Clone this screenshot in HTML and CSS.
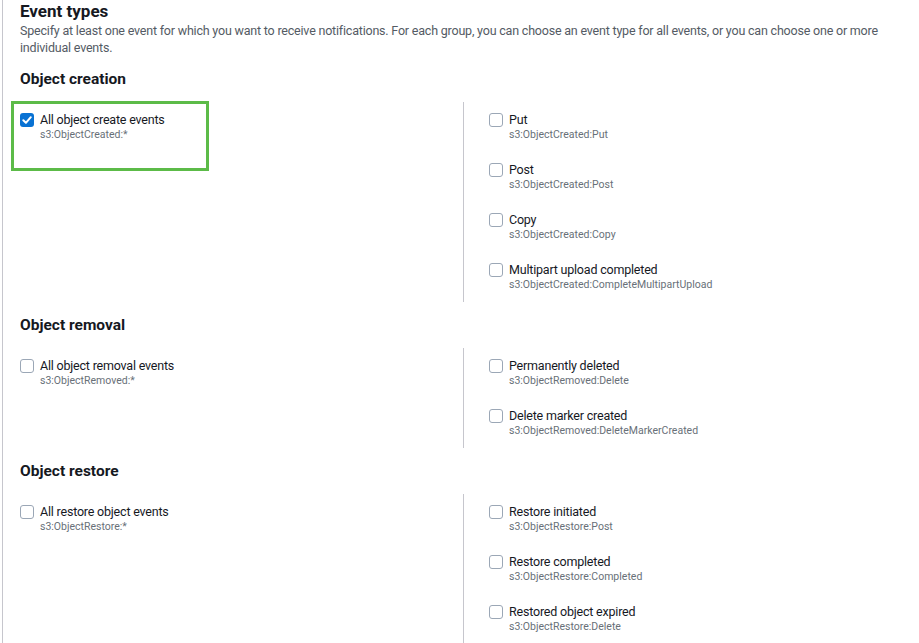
FILE: index.html
```html
<!DOCTYPE html>
<html>
<head>
<meta charset="utf-8">
<link rel="stylesheet" href="styles.css">
</head>
<body>
<div class="panel">
  <h2 class="title">Event types</h2>
  <p class="desc">Specify at least one event for which you want to receive notifications. For each group, you can choose an event type for all events, or you can choose one or more individual events.</p>

  <h3 class="group-title">Object creation</h3>
  <div class="group">
    <div class="col">
      <label class="opt highlighted">
        <span class="box checked"><svg viewBox="0 0 14 14" width="14" height="14"><path d="M3.3 7.2 L5.9 9.8 L10.8 4.2" fill="none" stroke="#fff" stroke-width="2" stroke-linecap="round" stroke-linejoin="round"/></svg></span>
        <span class="text"><span class="name">All object create events</span><span class="sub">s3:ObjectCreated:*</span></span>
      </label>
    </div>
    <div class="col right">
      <label class="opt"><span class="box"></span><span class="text"><span class="name">Put</span><span class="sub">s3:ObjectCreated:Put</span></span></label>
      <label class="opt"><span class="box"></span><span class="text"><span class="name">Post</span><span class="sub">s3:ObjectCreated:Post</span></span></label>
      <label class="opt"><span class="box"></span><span class="text"><span class="name">Copy</span><span class="sub">s3:ObjectCreated:Copy</span></span></label>
      <label class="opt"><span class="box"></span><span class="text"><span class="name">Multipart upload completed</span><span class="sub">s3:ObjectCreated:CompleteMultipartUpload</span></span></label>
    </div>
  </div>

  <h3 class="group-title">Object removal</h3>
  <div class="group">
    <div class="col">
      <label class="opt"><span class="box"></span><span class="text"><span class="name">All object removal events</span><span class="sub">s3:ObjectRemoved:*</span></span></label>
    </div>
    <div class="col right">
      <label class="opt"><span class="box"></span><span class="text"><span class="name">Permanently deleted</span><span class="sub">s3:ObjectRemoved:Delete</span></span></label>
      <label class="opt"><span class="box"></span><span class="text"><span class="name">Delete marker created</span><span class="sub">s3:ObjectRemoved:DeleteMarkerCreated</span></span></label>
    </div>
  </div>

  <h3 class="group-title">Object restore</h3>
  <div class="group">
    <div class="col">
      <label class="opt"><span class="box"></span><span class="text"><span class="name">All restore object events</span><span class="sub">s3:ObjectRestore:*</span></span></label>
    </div>
    <div class="col right">
      <label class="opt"><span class="box"></span><span class="text"><span class="name">Restore initiated</span><span class="sub">s3:ObjectRestore:Post</span></span></label>
      <label class="opt"><span class="box"></span><span class="text"><span class="name">Restore completed</span><span class="sub">s3:ObjectRestore:Completed</span></span></label>
      <label class="opt"><span class="box"></span><span class="text"><span class="name">Restored object expired</span><span class="sub">s3:ObjectRestore:Delete</span></span></label>
    </div>
  </div>
</div>
</body>
</html>
```

FILE: styles.css
```css
html, body {
  margin: 0;
  padding: 0;
  background: #ffffff;
}
body {
  font-family: Roboto, "Liberation Sans", sans-serif;
  color: #16191f;
  overflow: hidden;
}
.panel {
  margin-left: 2px;
  border-left: 1px solid #c6c6cd;
  padding-left: 17px;
  min-height: 643px;
}
.title {
  margin: 0;
  font-size: 17px;
  line-height: 22px;
  font-weight: 700;
}
.desc {
  margin: 0;
  font-size: 12.5px;
  letter-spacing: -0.2px;
  line-height: 17px;
  color: #545b64;
  padding-right: 30px;
}
.group-title {
  margin: 13px 0 13px;
  font-size: 15.5px;
  line-height: 20px;
  font-weight: 700;
}
.group {
  display: grid;
  grid-template-columns: 443px 1fr;
}
.col {
  display: flex;
  flex-direction: column;
  gap: 20px;
  padding: 10px 0 10px;
}
.col.right {
  border-left: 1px solid #c6c6cd;
  padding-left: 25px;
}
.opt {
  display: flex;
  align-items: flex-start;
  gap: 6px;
  position: relative;
}
.opt.highlighted::after {
  content: "";
  position: absolute;
  left: -9px;
  top: -11px;
  width: 192px;
  height: 64px;
  border: 3px solid #5cbb48;
}
.box {
  flex: 0 0 auto;
  width: 12px;
  height: 12px;
  margin-top: 1px;
  border: 1px solid #9ba7b6;
  border-radius: 3px;
  background: #fff;
  display: flex;
}
.box.checked {
  width: 14px;
  height: 14px;
  border: none;
  background: #0972d3;
}
.text {
  display: flex;
  flex-direction: column;
}
.name {
  font-size: 12.5px;
  letter-spacing: -0.2px;
  line-height: 16px;
  color: #16191f;
}
.sub {
  font-size: 10.5px;
  line-height: 14px;
  color: #687078;
}
```
